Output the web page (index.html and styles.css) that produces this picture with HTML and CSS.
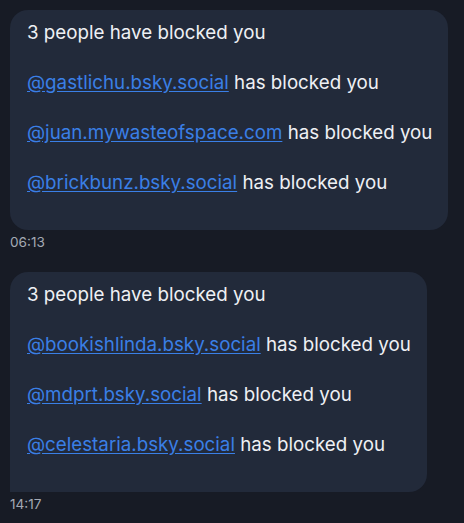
FILE: index.html
```html
<!DOCTYPE html>
<html>
<head>
<meta charset="utf-8">
<link rel="stylesheet" href="styles.css">
</head>
<body>
<div class="feed">
  <div class="msg">
    <div class="bubble">
      <p>3 people have blocked you</p>
      <p><a href="#">@gastlichu.bsky.social</a> has blocked you</p>
      <p><a href="#">@juan.mywasteofspace.com</a> has blocked you</p>
      <p><a href="#">@brickbunz.bsky.social</a> has blocked you</p>
    </div>
    <div class="time">06:13</div>
  </div>
  <div class="msg">
    <div class="bubble square-bl">
      <p>3 people have blocked you</p>
      <p><a href="#">@bookishlinda.bsky.social</a> has blocked you</p>
      <p><a href="#">@mdprt.bsky.social</a> has blocked you</p>
      <p><a href="#">@celestaria.bsky.social</a> has blocked you</p>
    </div>
    <div class="time">14:17</div>
  </div>
</div>
</body>
</html>
```
FILE: styles.css
```css
html, body {
  margin: 0;
  padding: 0;
  background: #171b25;
}
body {
  font-family: Inter, "Noto Sans", sans-serif;
  color: #eef0f4;
}
.feed {
  display: flex;
  flex-direction: column;
  gap: 22px;
  padding: 10px 0 0 10px;
}
.msg {
  display: flex;
  flex-direction: column;
  align-items: flex-start;
}
.bubble {
  background: #222a3a;
  border-radius: 18px;
  padding: 11px 16px 35px 17px;
  display: flex;
  flex-direction: column;
  gap: 26px;
}
.bubble.square-bl {
  border-bottom-left-radius: 0;
}
.bubble p {
  margin: 0;
  font-size: 18.75px;
  line-height: 24px;
  white-space: nowrap;
}
.bubble a {
  color: #3a7fe6;
  text-decoration: underline;
  text-underline-offset: 2px;
}
.time {
  font-size: 13.6px;
  line-height: 16px;
  color: #a3a9b4;
  margin-top: 4px;
}
```
